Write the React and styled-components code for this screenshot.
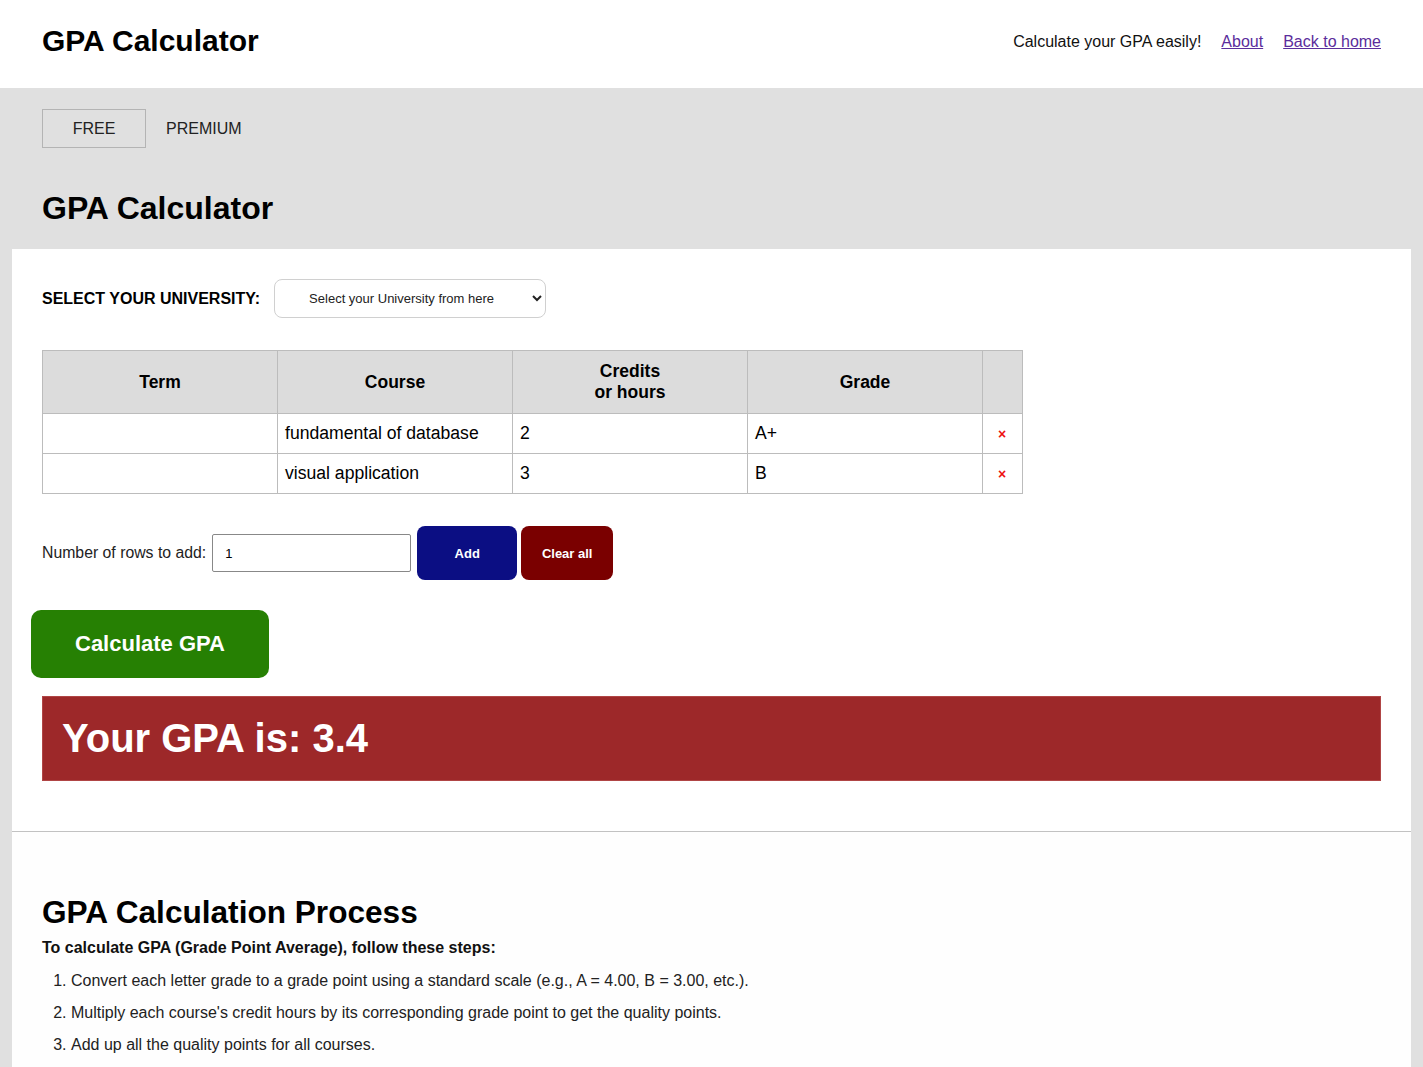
import styled, { createGlobalStyle } from "styled-components"

const GlobalStyle = createGlobalStyle`
    body {
        margin: 0;
        background: #e0e0e0;
        font-family: "Liberation Sans", Arial, sans-serif;
        color: #000;
    }
`

const Header = styled.header`
    height: 88px;
    background: white;
    padding: 0 42px;
    display: flex;
    align-items: center;
    justify-content: space-between;
`

const Brand = styled.div`
    font-size: 30px;
    font-weight: 700;
    margin-top: -6px;
`

const Nav = styled.nav`
    display: flex;
    align-items: center;
    gap: 20px;
    margin-top: -5px;
    font-size: 16px;
    color: #111;
`

const NavLink = styled.a`
    color: #5b2d9c;
    text-decoration: underline;
`

const Hero = styled.section`
    padding: 21px 42px 22px;
`

const Tabs = styled.div`
    display: flex;
    align-items: center;
    gap: 20px;
`

const Tab = styled.div`
    height: 39px;
    box-sizing: border-box;
    display: flex;
    align-items: center;
    justify-content: center;
    font-size: 16px;
    color: #222;
    width: ${props => props.active ? "104px" : "auto"};
    border: ${props => props.active ? "1px solid #b4b4b4" : "none"};
`

const Title = styled.h1`
    margin: 42px 0 0;
    font-size: 32px;
    line-height: 37px;
    font-weight: 700;
`

const Card = styled.main`
    margin: 0 12px;
    background: white;
    padding: 30px 30px 50px;
    border-bottom: 1px solid #c2c2c2;
`

const SelectRow = styled.div`
    display: flex;
    align-items: center;
    gap: 14px;
`

const Label = styled.label`
    font-size: 16px;
    font-weight: 700;
`

const Select = styled.select`
    width: 272px;
    height: 39px;
    border: 1px solid #d0d0d0;
    border-radius: 8px;
    background: white;
    font-family: inherit;
    font-size: 13px;
    color: #222;
    padding: 0 6px 0 30px;
`

const Table = styled.table`
    margin-top: 32px;
    width: 981px;
    border-collapse: collapse;
    border: 1px solid #bcbcbc;
    font-size: 17.6px;
`

const Th = styled.th`
    background: #dcdcdc;
    border: 1px solid #bcbcbc;
    height: 62px;
    width: ${props => props.narrow ? "39px" : "234px"};
    font-size: 17.5px;
    line-height: 21px;
    font-weight: 700;
    padding: 0;
`

const Td = styled.td`
    border: 1px solid #bcbcbc;
    height: 39px;
    padding: 0 0 0 7px;
    text-align: ${props => props.center ? "center" : "left"};
`

const Remove = styled.span`
    color: #ee1111;
    font-size: 14px;
    font-weight: 700;
    margin-left: -8px;
`

const Controls = styled.div`
    display: flex;
    align-items: center;
    margin-top: 32px;
    font-size: 15.8px;
    color: #222;
`

const RowsInput = styled.input`
    width: 199px;
    height: 38px;
    box-sizing: border-box;
    margin-left: 6px;
    border: 1px solid #888;
    border-radius: 2px;
    padding: 0 12px;
    font-family: inherit;
    font-size: 13px;
`

const SmallButton = styled.button`
    height: 54px;
    width: ${props => props.width};
    margin-left: ${props => props.gap};
    border: none;
    border-radius: 8px;
    background: ${props => props.color};
    color: white;
    font-family: inherit;
    font-size: 13px;
    font-weight: 700;
`

const CalcButton = styled.button`
    display: block;
    margin: 30px 0 0 -11px;
    width: 238px;
    height: 68px;
    border: none;
    border-radius: 10px;
    background: #268003;
    color: white;
    font-family: inherit;
    font-size: 22px;
    font-weight: 700;
`

const Result = styled.div`
    margin-top: 18px;
    height: 85px;
    box-sizing: border-box;
    display: flex;
    align-items: center;
    padding: 0 19px;
    background: #9d2829;
    border: 1px solid #b04545;
    color: white;
    font-size: 40px;
    font-weight: 700;
`

const Process = styled.section`
    margin: 0 12px;
    background: #fefefe;
    padding: 62px 30px 20px;
`

const ProcessTitle = styled.h2`
    margin: 0;
    font-size: 31.6px;
    line-height: 37px;
    font-weight: 700;
`

const Intro = styled.p`
    margin: 8px 0 0;
    font-size: 16px;
    font-weight: 700;
    color: #111;
`

const Steps = styled.ol`
    margin: 12px 0 0;
    padding-left: 29px;
    font-size: 16px;
    color: #222;
`

const Step = styled.li`
    line-height: 24px;
    margin-bottom: 8px;
`

const courses = [
    { course: "fundamental of database", credits: "2", grade: "A+" },
    { course: "visual application", credits: "3", grade: "B" },
]

export default function App() {
    return (
        <>
            <GlobalStyle />
            <Header>
                <Brand>GPA Calculator</Brand>
                <Nav>
                    <span>Calculate your GPA easily!</span>
                    <NavLink href="#">About</NavLink>
                    <NavLink href="#">Back to home</NavLink>
                </Nav>
            </Header>
            <Hero>
                <Tabs>
                    <Tab active>FREE</Tab>
                    <Tab>PREMIUM</Tab>
                </Tabs>
                <Title>GPA Calculator</Title>
            </Hero>
            <Card>
                <SelectRow>
                    <Label>SELECT YOUR UNIVERSITY:</Label>
                    <Select defaultValue="">
                        <option value="">Select your University from here</option>
                    </Select>
                </SelectRow>
                <Table>
                    <thead>
                        <tr>
                            <Th>Term</Th>
                            <Th>Course</Th>
                            <Th>Credits<br />or hours</Th>
                            <Th>Grade</Th>
                            <Th narrow></Th>
                        </tr>
                    </thead>
                    <tbody>
                        {courses.map(c => (
                            <tr key={c.course}>
                                <Td></Td>
                                <Td>{c.course}</Td>
                                <Td>{c.credits}</Td>
                                <Td>{c.grade}</Td>
                                <Td center><Remove>×</Remove></Td>
                            </tr>
                        ))}
                    </tbody>
                </Table>
                <Controls>
                    Number of rows to add:
                    <RowsInput defaultValue="1" />
                    <SmallButton color="#0b0e83" width="100px" gap="6px">Add</SmallButton>
                    <SmallButton color="#7a0000" width="92px" gap="4px">Clear all</SmallButton>
                </Controls>
                <CalcButton>Calculate GPA</CalcButton>
                <Result>Your GPA is: 3.4</Result>
            </Card>
            <Process>
                <ProcessTitle>GPA Calculation Process</ProcessTitle>
                <Intro>To calculate GPA (Grade Point Average), follow these steps:</Intro>
                <Steps>
                    <Step>Convert each letter grade to a grade point using a standard scale (e.g., A = 4.00, B = 3.00, etc.).</Step>
                    <Step>Multiply each course's credit hours by its corresponding grade point to get the quality points.</Step>
                    <Step>Add up all the quality points for all courses.</Step>
                </Steps>
            </Process>
        </>
    )
}
